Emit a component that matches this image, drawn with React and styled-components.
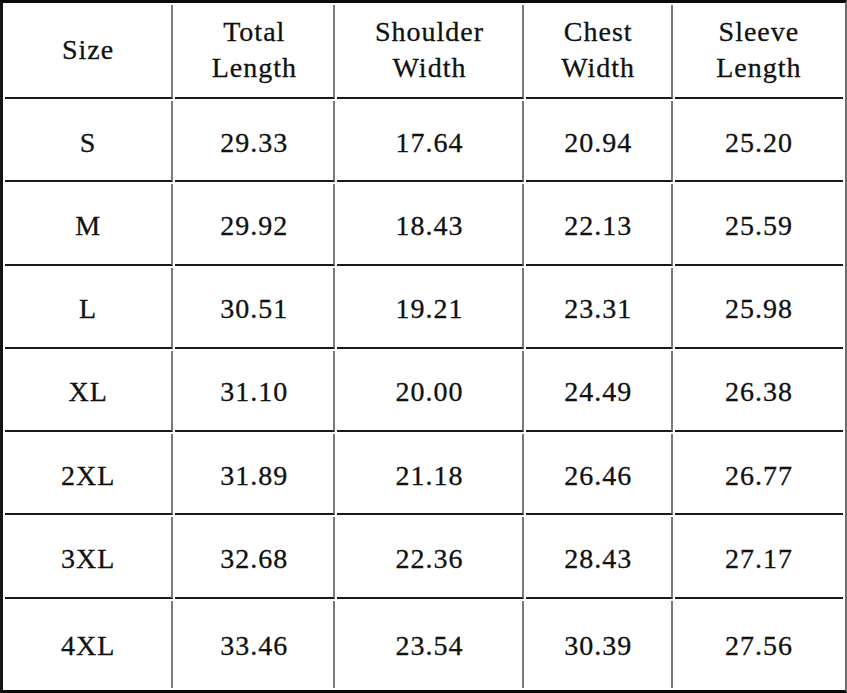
import React from "react";
import styled, { createGlobalStyle } from "styled-components";

const GlobalStyle = createGlobalStyle`
  html, body {
    margin: 0;
    padding: 0;
    background: #ffffff;
  }
`;

const headers = [
  ["Size"],
  ["Total", "Length"],
  ["Shoulder", "Width"],
  ["Chest", "Width"],
  ["Sleeve", "Length"],
];

const rows = [
  ["S", "29.33", "17.64", "20.94", "25.20"],
  ["M", "29.92", "18.43", "22.13", "25.59"],
  ["L", "30.51", "19.21", "23.31", "25.98"],
  ["XL", "31.10", "20.00", "24.49", "26.38"],
  ["2XL", "31.89", "21.18", "26.46", "26.77"],
  ["3XL", "32.68", "22.36", "28.43", "27.17"],
  ["4XL", "33.46", "23.54", "30.39", "27.56"],
];

const widths = [168, 160, 186, 147, 168];

function App() {
  return (
    <>
      <GlobalStyle />
      <Table>
        <colgroup>
          {widths.map((w, i) => (
            <col key={i} style={{ width: w }} />
          ))}
        </colgroup>
        <thead>
          <tr>
            {headers.map((lines, i) => (
              <HeadCell key={i}>
                {lines.map((l, j) => (
                  <Line key={j}>{l}</Line>
                ))}
              </HeadCell>
            ))}
          </tr>
        </thead>
        <tbody>
          {rows.map((row, i) => (
            <Row key={i} $last={i === rows.length - 1}>
              {row.map((v, j) => (
                <Cell key={j}>{v}</Cell>
              ))}
            </Row>
          ))}
        </tbody>
      </Table>
    </>
  );
}

const Table = styled.table`
  width: 847px;
  height: 693px;
  table-layout: fixed;
  border-collapse: separate;
  border-spacing: 2px;
  border-top: 3px solid #0a0a0a;
  border-bottom: 3px solid #0a0a0a;
  border-left: 3px solid #151515;
  border-right: 2px solid #6a6a6a;
  box-sizing: border-box;
  font-family: "Liberation Serif", "DejaVu Serif", serif;
  font-size: 28px;
  letter-spacing: 1px;
  color: #111111;
  -webkit-text-stroke: 0.3px #111111;
`;

const HeadCell = styled.th`
  height: 90px;
  padding: 0 0 2px;
  font-weight: normal;
  line-height: 36px;
  text-align: center;
  vertical-align: middle;
  border-bottom: 2px solid #1a1a1a;
  border-right: 2px solid #7a7a7a;

  &:last-child {
    border-right: none;
  }
`;

const Row = styled.tr`
  height: ${(p) => (p.$last ? "86px" : "80px")};

  & > td {
    border-bottom: ${(p) => (p.$last ? "none" : "2px solid #1a1a1a")};
  }
`;

const Cell = styled.td`
  padding: 4px 0 0;
  text-align: center;
  vertical-align: middle;
  border-right: 2px solid #7a7a7a;

  &:last-child {
    border-right: none;
  }
`;

const Line = styled.span`
  display: block;
`;

export default App;
